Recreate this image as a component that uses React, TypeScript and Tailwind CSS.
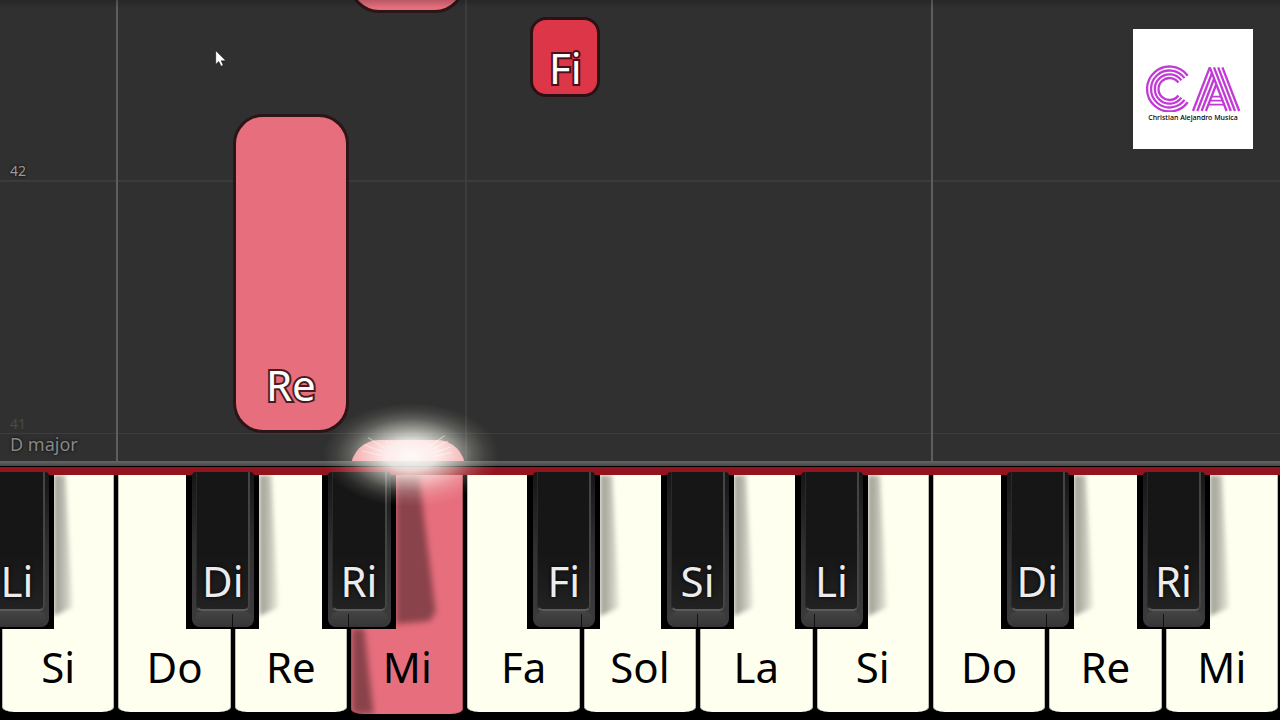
type BlackKey = { label: string; left: string };
type Key = { label: string; black?: BlackKey; before?: BlackKey; seam?: boolean; lit?: boolean; line?: string };

const keys: Key[] = [
  { label: "Si", before: { label: "Li", left: "left-[-17%]" } },
  { label: "Do", black: { label: "Di", left: "left-[60%]" }, line: "border-[#5e5e5e]" },
  { label: "Re", black: { label: "Ri", left: "left-[77%]" }, seam: true },
  { label: "Mi", lit: true, seam: true },
  { label: "Fa", black: { label: "Fi", left: "left-[53%]" }, line: "border-[#3d3d3d]" },
  { label: "Sol", black: { label: "Si", left: "left-[68%]" }, seam: true },
  { label: "La", black: { label: "Li", left: "left-[83%]" }, seam: true },
  { label: "Si", seam: true },
  { label: "Do", black: { label: "Di", left: "left-[60%]" }, line: "border-[#5e5e5e]" },
  { label: "Re", black: { label: "Ri", left: "left-[77%]" }, seam: true },
  { label: "Mi", seam: true },
];

const noteLabel = "text-[42px] leading-[48px] text-white [paint-order:stroke_fill]";

function Logo() {
  return (
    <div className="flex size-[120px] flex-col items-center bg-white pt-[34px]">
      <svg viewBox="0 34 120 49" className="h-[49px] w-[120px] shrink-0" fill="none" stroke="#c23ad6" strokeWidth="2.3">
        {/* C */}
        {[22.5, 18.5, 14.7, 11].map((r) => (
          <path key={r} d={`M${36.5 + r * 0.81} ${60 - r * 0.59}A${r} ${r} 0 1 0 ${36.5 + r * 0.81} ${60 + r * 0.59}`} />
        ))}
        {/* A */}
        <path d="M60 82L76.8 38.3M64.3 82L78.8 44.5M68.6 82L81 50M72.9 82L83.2 55.5" />
        <path d="M76.8 38.3L93.6 82M81 38.3L97.8 82M85.2 38.3L102 82M89.4 38.3L106.2 82" />
        <path d="M78.5 67.7H88M77 71.7H89.6M75.4 75.7H91.2" strokeWidth="1.8" />
      </svg>
      <p className="text-[7px] leading-[12px] font-medium whitespace-nowrap text-black">Christian Alejandro Musica</p>
    </div>
  );
}

function BlackKeyView({ label, left, lit }: BlackKey & { lit?: boolean }) {
  return (
    <div className={`absolute top-0 z-20 flex w-[63%] items-start ${left}`}>
      <button type="button" className="flex h-[154px] w-full shrink-0 bg-black pr-[5px] pb-[2px] pl-[6px]">
        <span className="-mt-[3px] flex h-[155px] min-w-0 flex-1 flex-col rounded-t-sm rounded-b-lg bg-linear-to-b from-[#161616] via-[#303030] to-[#3c3c3c]">
          <span className="mx-[4px] flex flex-1 items-end justify-center rounded-b-md border-r-2 border-b-2 border-l border-r-[#444444] border-b-[#5c5c5c] border-l-[#292929] bg-linear-to-b from-[#161616] from-60% to-[#222222] pb-[4px] text-[42px] leading-[48px] text-[#ececec] [text-shadow:0_0_4px_#000]">
            {label}
          </span>
          <span className="mx-[3px] h-[16px] rounded-t-lg rounded-b-md bg-linear-to-b from-[#444444] to-[#353535]" />
        </span>
      </button>
      {/* Shadow on the key to the right */}
      {lit ? (
        <span className="shrink-0 overflow-hidden pr-2 pb-2">
          <span className="flex blur-[3px]">
            <span className="h-[149px] w-10 bg-black/40 [clip-path:polygon(0_0,58%_0,100%_92%,85%_98%,0_100%)]" />
          </span>
        </span>
      ) : (
        <span className="shrink-0 overflow-hidden pr-2 pb-2">
          <span className="flex blur-[2px]">
            <span className="h-[141px] w-5 bg-linear-to-r from-black/40 via-black/25 to-black/5 [clip-path:polygon(0_0,60%_0,95%_94%,0_100%)]" />
          </span>
        </span>
      )}
    </div>
  );
}

function HitGlow() {
  const rays = [-76, -68, -58, -45, 55, 63, 71, 78];
  return (
    <svg viewBox="0 0 180 110" className="pointer-events-none absolute -top-[75px] -left-[30px] z-30 h-[110px] w-[180px]">
      <defs>
        <radialGradient id="halo">
          <stop offset="0" stopColor="#fff" stopOpacity="0.95" />
          <stop offset="0.3" stopColor="#fffffa" stopOpacity="0.82" />
          <stop offset="0.5" stopColor="#fffff5" stopOpacity="0.52" />
          <stop offset="0.7" stopColor="#fffff0" stopOpacity="0.22" />
          <stop offset="0.85" stopColor="#fffff0" stopOpacity="0.08" />
          <stop offset="1" stopColor="#fffff0" stopOpacity="0" />
        </radialGradient>
      </defs>
      <ellipse cx="92" cy="55" rx="88" ry="52" fill="url(#halo)" />
      <g stroke="#fff" strokeOpacity="0.5">
        {rays.map((a) => (
          <line key={a} x1="88" y1="35" x2="88" y2={Math.abs(a) < 50 ? 32 : 16} transform={`rotate(${a} 88 62)`} />
        ))}
      </g>
    </svg>
  );
}

function LaneNotes({ lane }: { lane: number }) {
  if (lane === 2) {
    return (
      <div className="mt-auto mb-[28px] -ml-[2px] flex h-[319px] items-end justify-center rounded-[30px] border-[3px] border-[#2b1517] bg-[#e76f7d] pb-[21px]">
        <span className={`${noteLabel} [-webkit-text-stroke:4px_#4a1a20]`}>Re</span>
      </div>
    );
  }
  if (lane === 3) {
    return (
      <>
        <div className="-mt-[60px] -ml-[2px] h-[73px] rounded-b-[30px] border-[3px] border-[#2b1517] bg-[#e76f7d]" />
        <div className="mt-auto -mb-[40px] h-[61px] rounded-t-[28px] bg-[#f0909b]" />
      </>
    );
  }
  if (lane === 4) {
    return (
      <div className="mt-[17px] ml-[55%] flex h-[80px] w-[61%] items-end justify-center rounded-[16px] border-[3px] border-[#2b1014] bg-[#dd3648] pb-[2px]">
        <span className={`${noteLabel} [-webkit-text-stroke:4px_#4a0f18]`}>Fi</span>
      </div>
    );
  }
  return null;
}

function PianoRoll() {
  return (
    <section className="relative grid min-h-[440px] flex-1 overflow-hidden bg-[#303030]">
      {/* Measures */}
      <div className="col-start-1 row-start-1 flex flex-col justify-end text-[14px] leading-[18px] text-[#999999]">
        <div className="border-b-2 border-[#3b3b3b] pl-[10px] [text-shadow:0_0_3px_#000]">42</div>
        <div className="flex h-[252px] items-end border-b border-[#3d3d3d] pl-[10px] text-[#4a4a4a]">41</div>
        <div className="h-[27px] pl-[10px] text-[18px] leading-[20px] text-[#888888] [text-shadow:0_0_3px_#000]">D major</div>
      </div>

      {/* Lanes */}
      <div className="col-start-1 row-start-1 flex">
        {keys.map((key, i) => (
          <div key={i} className={`flex min-w-0 flex-1 flex-col border-l-2 ${key.line ?? "border-transparent"}`}>
            <LaneNotes lane={i} />
          </div>
        ))}
      </div>

      <div className="z-10 col-start-1 row-start-1 h-2 bg-linear-to-b from-black/20 to-transparent" />

      <div className="z-10 col-start-1 row-start-1 flex items-start justify-end pt-[29px] pr-[27px]">
        <Logo />
      </div>

      {/* Mouse pointer */}
      <svg viewBox="0 0 12 18" className="absolute top-[50px] left-[215px] z-20 h-[18px] w-[12px]">
        <path d="M.7 .6V14.4L3.8 11.6L6 16.3L8.3 15.3L6.2 10.8H10.9Z" fill="#ffffff" stroke="#000000" strokeWidth=".5" />
      </svg>
    </section>
  );
}

function Keyboard() {
  return (
    <section className="bg-black">
      <div className="h-[6px] border-b border-black bg-linear-to-b from-[#666666] to-[#484848]" />
      <div className="h-[8px] bg-[#93141f]" />
      <div className="flex h-[245px]">
        {keys.map((key, i) => (
          <div key={i} className={`relative min-w-0 flex-1 px-[2px] ${key.lit ? "pb-[6px]" : "pb-[8px]"}`}>
            <button
              type="button"
              className={`flex size-full items-end overflow-hidden rounded-b-[12px_5px] border-x text-[42px] leading-[48px] text-black ${
                key.lit ? "border-[#a64f59] bg-[#e76f7d]" : "border-[#b9b9ad] bg-[#fffff0]"
              }`}
            >
              {key.lit && (
                <span className="-mr-6 flex shrink-0 blur-[3px]">
                  <span className="h-[86px] w-6 bg-black/40 [clip-path:polygon(0_0,50%_0,90%_100%,0_100%)]" />
                </span>
              )}
              <span className={`flex-1 text-center ${key.lit ? "pb-[23px]" : "pb-[21px]"}`}>{key.label}</span>
            </button>
            {key.seam && <span className="absolute top-[139px] -left-px z-30 h-[16px] w-px bg-black/70" />}
            {key.before && <BlackKeyView {...key.before} />}
            {key.black && <BlackKeyView {...key.black} lit={i === 2} />}
            {key.lit && <HitGlow />}
          </div>
        ))}
      </div>
    </section>
  );
}

export default function App() {
  return (
    <main className="flex min-h-screen flex-col overflow-hidden bg-black font-['Noto_Sans','Open_Sans',sans-serif]">
      <PianoRoll />
      <Keyboard />
    </main>
  );
}
